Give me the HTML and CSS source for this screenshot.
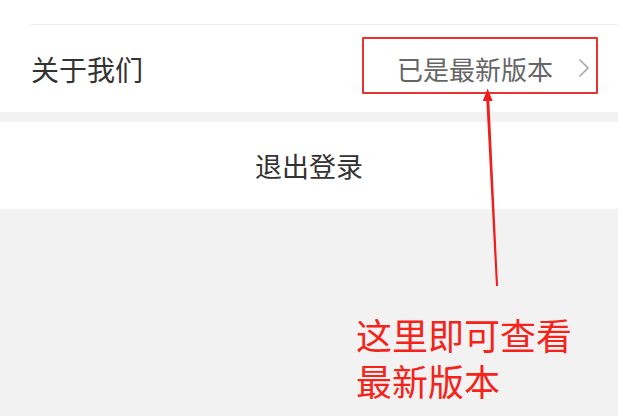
FILE: index.html
```html
<!DOCTYPE html>
<html lang="zh-CN">
<head>
<meta charset="utf-8">
<title>设置</title>
<link rel="stylesheet" href="styles.css">
</head>
<body>
<div class="page">
  <div class="top"></div>
  <div class="list">
    <div class="row">
      <span class="label">关于我们</span>
      <span class="value">已是最新版本</span>
      <svg class="chev" width="12" height="20" viewBox="0 0 12 20"><path d="M1.5 1.5 L10 10 L1.5 18.5" fill="none" stroke="#a6a6a6" stroke-width="1.6"/></svg>
    </div>
  </div>
  <div class="logout">退出登录</div>

  <div class="mark-box"></div>
  <svg class="arrow" width="623" height="416" viewBox="0 0 623 416">
    <polygon points="486.3,100 489.3,100 498,286 496,286" fill="#f21c1c"/>
    <polygon points="487.6,88.5 482.8,101 492.6,101" fill="#f21c1c"/>
  </svg>
  <div class="note">这里即可查看<br>最新版本</div>
</div>
</body>
</html>
```
FILE: styles.css
```css
html, body {
  margin: 0;
  padding: 0;
  background: #ffffff;
}
body {
  font-family: "Noto Sans CJK SC", "Noto Sans", sans-serif;
}
.page {
  position: relative;
  width: 618px;
  height: 416px;
  background: #f2f2f2;
  overflow: hidden;
}
.top {
  height: 24px;
  background: #ffffff;
}
.list {
  background: #ffffff;
  padding-left: 30px;
}
.row {
  height: 87px;
  border-top: 1px solid #ededed;
  display: flex;
  align-items: center;
  padding-right: 28px;
}
.label {
  font-size: 28px;
  color: #333333;
  flex: 1;
  line-height: 1;
  margin-left: 1px;
}
.value {
  font-size: 26px;
  color: #666666;
  line-height: 1;
  margin-right: 25px;
}
.chev {
  display: block;
  margin-top: -2px;
}
.logout {
  margin-top: 10px;
  height: 87px;
  background: #ffffff;
  display: flex;
  align-items: center;
  justify-content: center;
  font-size: 27px;
  color: #333333;
  line-height: 1;
}
.mark-box {
  position: absolute;
  left: 362px;
  top: 37px;
  width: 232px;
  height: 53px;
  border: 2px solid #e8332f;
  border-radius: 1px;
}
.arrow {
  position: absolute;
  left: 0;
  top: 0;
}
.note {
  position: absolute;
  left: 356px;
  top: 311px;
  font-size: 36px;
  line-height: 46px;
  color: #f5231a;
}
```
